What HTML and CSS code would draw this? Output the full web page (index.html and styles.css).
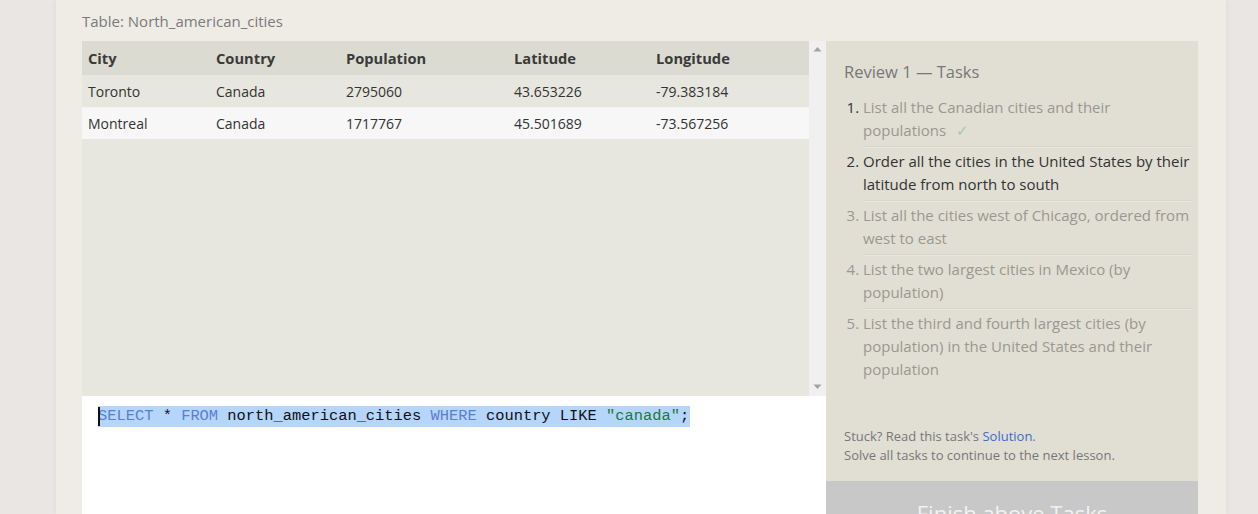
FILE: index.html
```html
<!DOCTYPE html>
<html>
<head>
<meta charset="utf-8">
<link rel="stylesheet" href="styles.css">
</head>
<body>
<div class="page">
  <div class="lesson">
    <div class="label">Table: North_american_cities</div>
    <div class="workspace">
      <div class="left">
        <div class="results">
          <div class="table-wrap">
            <table class="data">
              <colgroup>
                <col class="c1"><col class="c2"><col class="c3"><col class="c4"><col class="c5">
              </colgroup>
              <thead>
                <tr><th>City</th><th>Country</th><th>Population</th><th>Latitude</th><th>Longitude</th></tr>
              </thead>
              <tbody>
                <tr class="odd"><td>Toronto</td><td>Canada</td><td>2795060</td><td>43.653226</td><td>-79.383184</td></tr>
                <tr class="even"><td>Montreal</td><td>Canada</td><td>1717767</td><td>45.501689</td><td>-73.567256</td></tr>
              </tbody>
            </table>
          </div>
          <div class="scrollbar">
            <svg class="arrow" width="9" height="6" viewBox="0 0 9 6"><path d="M0.5 5.5 L4.5 1 L8.5 5.5 Z" fill="#a3a3a3"/></svg>
            <svg class="arrow" width="9" height="6" viewBox="0 0 9 6"><path d="M0.5 0.5 L4.5 5 L8.5 0.5 Z" fill="#a3a3a3"/></svg>
          </div>
        </div>
        <div class="editor">
          <div class="code"><span class="cursor"></span><span class="sel"><span class="kw">SELECT</span> * <span class="kw">FROM</span> north_american_cities <span class="kw">WHERE</span> country LIKE <span class="str">"canada"</span>;</span></div>
        </div>
      </div>
      <div class="right">
        <div class="tasks">
          <h2 class="title">Review 1 — Tasks</h2>
          <ol class="task-list">
            <li class="done">List all the Canadian cities and their populations<span class="check">✓</span></li>
            <li class="current">Order all the cities in the United States by their latitude from north to south</li>
            <li class="todo">List all the cities west of Chicago, ordered from west to east</li>
            <li class="todo">List the two largest cities in Mexico (by population)</li>
            <li class="todo last">List the third and fourth largest cities (by population) in the United States and their population</li>
          </ol>
          <div class="hint">
            <div>Stuck? Read this task's <a class="link">Solution</a>.</div>
            <div>Solve all tasks to continue to the next lesson.</div>
          </div>
        </div>
        <div class="finish">Finish above Tasks</div>
      </div>
    </div>
  </div>
</div>
</body>
</html>
```

FILE: styles.css
```css
html, body {
  margin: 0;
  padding: 0;
  overflow: hidden;
  height: 514px;
}
body {
  background: #e9e6e3;
  font-family: "Open Sans", "Liberation Sans", sans-serif;
}
.page {
  display: flex;
  height: 514px;
}
.lesson {
  margin-left: 56px;
  width: 1170px;
  box-sizing: border-box;
  padding: 10px 28px 0 26px;
  background: #efece6;
  box-shadow: 0 0 6px rgba(0,0,0,0.06);
}
.label {
  font-size: 15px;
  line-height: 22px;
  color: #7a7a7a;
  height: 31px;
}
.workspace {
  display: flex;
  height: 520px;
}
.left {
  width: 744px;
  display: flex;
  flex-direction: column;
}
.results {
  display: flex;
  height: 355px;
  background: #e8e7df;
}
.table-wrap {
  flex: 1;
}
.data {
  width: 100%;
  border-collapse: collapse;
  table-layout: fixed;
  font-size: 14px;
  color: #333;
}
.c1 { width: 128px; }
.c2 { width: 130px; }
.c3 { width: 168px; }
.c4 { width: 142px; }
.c5 { width: 159px; }
.data th {
  text-align: left;
  font-weight: 700;
  height: 34px;
  padding: 0 6px;
  background: #dcdbd1;
  color: #3a3a3a;
  font-size: 14.7px;
}
.data td {
  height: 32px;
  padding: 0 6px;
}
.data tr.odd td { background: #e8e7df; border-bottom: 1px solid #f4f4f2; }
.data tr.even td { background: #f7f7f7; height: 31px; }
.scrollbar {
  width: 17px;
  background: #f0f0f0;
  display: flex;
  flex-direction: column;
  justify-content: space-between;
  align-items: center;
  padding: 5px 0 6px;
  box-sizing: border-box;
}
.editor {
  flex: 1;
  background: #fff;
  padding: 10px 16px;
}
.code {
  font-family: "Liberation Mono", "DejaVu Sans Mono", monospace;
  font-size: 15.4px;
  line-height: 21px;
  color: #111;
  white-space: pre;
  display: flex;
  align-items: center;
}
.cursor {
  display: inline-block;
  width: 2px;
  height: 19px;
  background: #111;
  margin-right: -2px;
  position: relative;
  z-index: 1;
}
.sel {
  background: #b5d5fb;
  padding: 0 1px 0 0;
}
.kw { color: #5a7fd0; }
.str { color: #1d7a3a; }
.right {
  width: 372px;
  display: flex;
  flex-direction: column;
}
.tasks {
  background: #e1dfd4;
  height: 440px;
  box-sizing: border-box;
  padding: 18px 6px 0 18px;
  display: flex;
  flex-direction: column;
}
.title {
  margin: 0 0 11px 0;
  font-weight: 400;
  font-size: 16.5px;
  line-height: 26px;
  color: #777;
}
.task-list {
  margin: 0;
  padding: 0 0 0 19px;
  font-size: 15px;
  line-height: 23px;
}
.task-list li {
  padding: 0 0 4px 0;
  margin-bottom: 3px;
  border-bottom: 1px solid #d8d6cc;
  box-shadow: 0 1px 0 #e9e7de;
}
.task-list li.last { border-bottom: none; box-shadow: none; }
.task-list li.done { color: #9a9890; }
.task-list li.current { color: #333; }
.task-list li.todo { color: #9a9890; }
.task-list li::marker { color: inherit; }
.task-list li.done::marker { color: #333; }
.check {
  color: #a9c8a3;
  margin-left: 10px;
}
.hint {
  margin-top: auto;
  margin-bottom: 16px;
  font-size: 13px;
  line-height: 19px;
  color: #777;
}
.link {
  color: #3c6bcb;
}
.finish {
  background: #c8c8c8;
  color: #f2f2f2;
  font-size: 22px;
  text-align: center;
  height: 60px;
  line-height: 64px;
}
```
